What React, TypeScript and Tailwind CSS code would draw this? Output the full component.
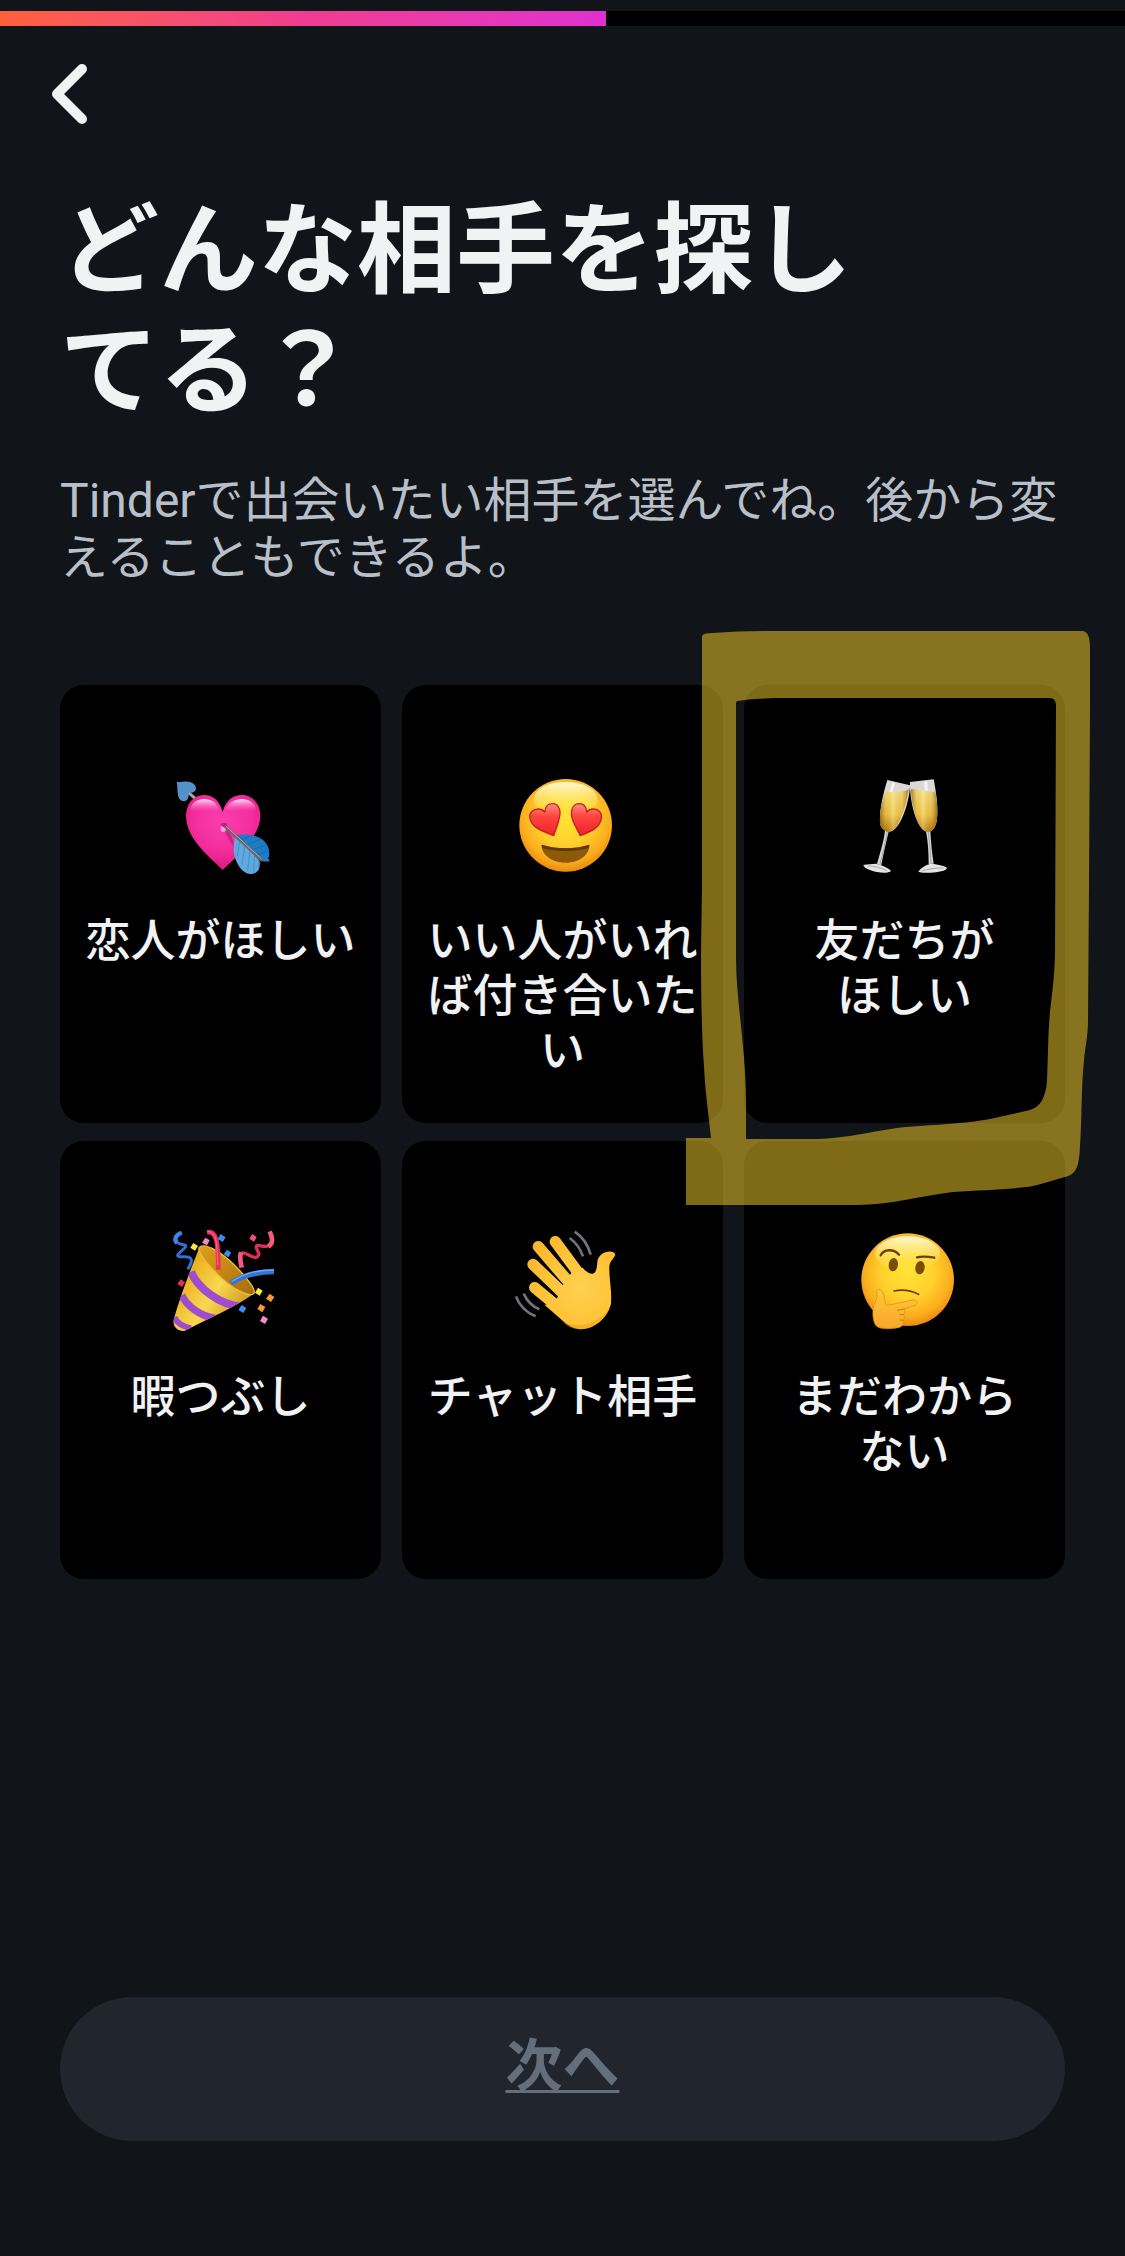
import type { ReactNode } from "react";

// ─── Types ────────────────────────────────────────────────────────────────────

interface Option {
  id: string;
  label: string;
  icon: ReactNode;
}

// ─── Icons ────────────────────────────────────────────────────────────────────

function Icon({ viewBox, children }: { viewBox: string; children: ReactNode }) {
  return (
    <svg viewBox={viewBox} className="size-[130px] shrink-0" aria-hidden="true">
      {children}
    </svg>
  );
}

function HeartArrowIcon() {
  return (
    <Icon viewBox="-12 0 390 390">
      <defs>
        <radialGradient id="ha-body" cx="0.5" cy="0.35" r="0.65">
          <stop offset="0" stopColor="#fb3fae" />
          <stop offset="0.6" stopColor="#f42d9d" />
          <stop offset="1" stopColor="#d81b80" />
        </radialGradient>
        <linearGradient id="ha-shine" x1="0" y1="0" x2="0" y2="1">
          <stop offset="0" stopColor="#ffe3f4" />
          <stop offset="1" stopColor="#ff5fbd" stopOpacity="0" />
        </linearGradient>
        <linearGradient id="ha-tip" x1="0" y1="0" x2="1" y2="1">
          <stop offset="0" stopColor="#4f93cf" />
          <stop offset="1" stopColor="#5a8fc4" />
        </linearGradient>
      </defs>
      <path d="M86 98l20 18" stroke="#a9a3a6" strokeWidth="9" />
      <path
        d="M50 66c14 2 24-5 39 0 15 3 22 15 18 25-5 8-11 7-20 6-1 14-3 27-15 27-14-1-18-14-19-26-2-13 0-22-3-32z"
        fill="url(#ha-tip)"
      />
      <path
        d="M188 330C160 300 78 240 78 168c0-36 22-63 54-63 26 0 46 15 56 51 10-36 31-51 58-51 32 0 55 27 55 63 0 66-84 132-113 162z"
        fill="url(#ha-body)"
      />
      <path
        d="M88 156c4-24 20-39 44-39 22 0 38 10 46 32-24 8-60-4-90 7zM198 149c8-22 26-32 48-32 24 0 40 14 44 36-30-8-66 4-92-4z"
        fill="url(#ha-shine)"
      />
      <path d="M193 200c14 10 27 30 30 64-12-22-28-35-30-64z" fill="#b81573" opacity="0.6" />
      <ellipse cx="190" cy="206" rx="8" ry="10" fill="#ff9bd3" />
      <path
        d="M228 225c26-4 60-2 82 16 14 12 20 30 17 48-2 10-12 14-20 12z"
        fill="#1f7cc4"
      />
      <path
        d="M228 225c-10 25-10 60 4 85 10 20 25 33 42 32 20-1 28-18 25-40z"
        fill="#5fa9df"
      />
      <g stroke="#3c7fb8" strokeWidth="2" fill="none" strokeLinecap="round">
        <path d="M240 238l-8 50M255 252l-9 60M270 266l-7 64M284 280l-3 54M296 295v36" />
      </g>
      <g stroke="#1360a0" strokeWidth="2" fill="none" strokeLinecap="round">
        <path d="M248 238l28-12M264 253l36-15M280 268l38-13M294 283l32-9" />
      </g>
      <path d="M193 197l112 103" stroke="#6d6468" strokeWidth="9" strokeLinecap="round" />
      <path d="M196 197l108 99" stroke="#b5a9ab" strokeWidth="3" strokeLinecap="round" />
      <path d="M312 300h12" stroke="#2a7fc0" strokeWidth="9" strokeLinecap="round" />
      <ellipse cx="192" cy="194" rx="10" ry="6" fill="#a9146b" opacity="0.6" />
    </Icon>
  );
}

function FaceDefs({ id }: { id: string }) {
  return (
    <defs>
      <radialGradient id={id} cx="0.5" cy="0.42" r="0.58">
        <stop offset="0" stopColor="#ffe336" />
        <stop offset="0.5" stopColor="#ffd02c" />
        <stop offset="0.82" stopColor="#fbad1e" />
        <stop offset="1" stopColor="#ea8a10" />
      </radialGradient>
      <linearGradient id={`${id}-shine`} x1="0" y1="0" x2="0" y2="1">
        <stop offset="0" stopColor="#fffce0" stopOpacity="0.95" />
        <stop offset="1" stopColor="#ffee50" stopOpacity="0" />
      </linearGradient>
    </defs>
  );
}

function HeartEyesIcon() {
  return (
    <Icon viewBox="-7 0 390 390">
      <FaceDefs id="he" />
      <defs>
        <linearGradient id="he-eye" x1="0" y1="0" x2="0" y2="1">
          <stop offset="0" stopColor="#ff8d80" />
          <stop offset="0.4" stopColor="#fd4540" />
          <stop offset="1" stopColor="#ee2228" />
        </linearGradient>
      </defs>
      <circle cx="196" cy="196" r="139" fill="url(#he)" />
      <ellipse cx="196" cy="118" rx="96" ry="52" fill="url(#he-shine)" />
      <g fill="url(#he-eye)" stroke="#c4201c" strokeWidth="4" strokeLinejoin="round">
        <path d="M160 227c-24-10-66-22-71-52-3-17 9-28 25-28 8 0 15 3 20 9 0-15 8-25 21-25 16-1 25 12 24 31-2 22-13 48-19 65z" />
        <path d="M240 227c-8-18-26-42-27-66 0-18 9-30 24-30 13 0 21 10 22 25 5-6 12-9 20-9 16 0 27 12 24 28-4 30-38 42-63 52z" />
      </g>
      <path
        d="M124 254c44 14 100 14 143 0 2 28-28 54-71 54s-74-26-72-54z"
        fill="#8c5a07"
      />
      <path d="M124 254c44 14 100 14 143 0l-1 10c-44 12-98 12-141 0z" fill="#5f3802" />
    </Icon>
  );
}

function ChampagneIcon() {
  return (
    <Icon viewBox="-1 0 390 390">
      <defs>
        <linearGradient id="ch-wine" x1="0" y1="0" x2="0" y2="1">
          <stop offset="0" stopColor="#f8e28a" />
          <stop offset="0.6" stopColor="#ecc448" />
          <stop offset="1" stopColor="#ac7010" />
        </linearGradient>
        <linearGradient id="ch-edge" x1="0" y1="0" x2="1" y2="0">
          <stop offset="0" stopColor="#5c3804" stopOpacity="0.6" />
          <stop offset="0.22" stopColor="#c08a1a" stopOpacity="0.15" />
          <stop offset="0.45" stopColor="#fff2a8" stopOpacity="0.4" />
          <stop offset="0.75" stopColor="#c08a1a" stopOpacity="0.15" />
          <stop offset="1" stopColor="#5c3804" stopOpacity="0.6" />
        </linearGradient>
      </defs>
      {/* Left glass */}
      <path d="M134 213c-4 34-15 66-24 99l13 4c6-34 14-68 22-101z" fill="#d6d4d3" />
      <path d="M141 216c-6 34-15 66-22 98" stroke="#8f8b8a" strokeWidth="2" fill="none" />
      <path d="M69 315c12-3 27-3 38-4 16 4 38 12 45 22-6 6-24 7-42 3-20-4-40-12-41-21z" fill="#e6e4e3" />
      <path d="M82 318c16-1 42 6 58 14" stroke="#aaa6a5" strokeWidth="3" fill="none" />
      <path
        d="M141 60l68 16c0 34-22 124-56 138-14 5-32-8-34-24-2-44 10-90 22-130z"
        fill="#dcd8d5"
      />
      <path
        d="M134 98c22-10 42 6 71-10-6 42-26 114-52 126-14 5-32-8-34-24-1-34 5-62 15-92z"
        fill="url(#ch-wine)"
      />
      <path
        d="M134 98c22-10 42 6 71-10-6 42-26 114-52 126-14 5-32-8-34-24-1-34 5-62 15-92z"
        fill="url(#ch-edge)"
      />
      <path d="M160 68l-8 28" stroke="#fff" strokeWidth="8" opacity="0.8" />
      {/* Right glass */}
      <path d="M257 214c6 32 8 64 8 98l15-1c-5-32-8-64-10-97z" fill="#d6d4d3" />
      <path d="M264 216c4 30 6 62 8 94" stroke="#8f8b8a" strokeWidth="2" fill="none" />
      <path d="M234 335c8-12 20-18 34-23h14c14 3 34 6 38 12-2 9-28 13-48 14-18 0-34 0-38-3z" fill="#e6e4e3" />
      <path d="M244 333c18-6 44-10 66-9" stroke="#aaa6a5" strokeWidth="3" fill="none" />
      <path
        d="M209 66l71-8c8 40 14 88 9 126-4 20-14 32-28 32-34-6-54-98-52-150z"
        fill="#dcd8d5"
      />
      <path
        d="M212 88c24-4 46 14 73 6 6 32 8 62 4 90-4 20-14 32-28 32-30-6-48-82-49-128z"
        fill="url(#ch-wine)"
      />
      <path
        d="M212 88c24-4 46 14 73 6 6 32 8 62 4 90-4 20-14 32-28 32-30-6-48-82-49-128z"
        fill="url(#ch-edge)"
      />
      <path d="M256 64l2 28" stroke="#fff" strokeWidth="10" opacity="0.7" />
    </Icon>
  );
}

function PartyIcon() {
  return (
    <Icon viewBox="-13 3 390 390">
      <defs>
        <linearGradient id="pp-cone" x1="0" y1="0" x2="1" y2="0.7">
          <stop offset="0" stopColor="#c98c10" />
          <stop offset="0.35" stopColor="#efbc2c" />
          <stop offset="0.6" stopColor="#f9d850" />
          <stop offset="1" stopColor="#c88c14" />
        </linearGradient>
        <linearGradient id="pp-in" x1="0" y1="0" x2="1" y2="1">
          <stop offset="0" stopColor="#dca11c" />
          <stop offset="1" stopColor="#a66c0a" />
        </linearGradient>
        <clipPath id="pp-clip">
          <path d="M118 96C100 140 60 240 40 315c-3 20 10 34 32 33 60-32 150-70 208-112z" />
        </clipPath>
      </defs>
      <path
        d="M118 96C100 140 60 240 40 315c-3 20 10 34 32 33 60-32 150-70 208-112-50-2-150-90-162-140z"
        fill="url(#pp-cone)"
      />
      <g clipPath="url(#pp-clip)" fill="none" stroke="#a04cd0">
        <path d="M92 170c20 50 90 102 150 104" strokeWidth="24" />
        <path d="M64 240c14 32 54 62 100 70" strokeWidth="22" />
        <path d="M42 306c6 16 24 28 50 34" strokeWidth="18" />
      </g>
      <path
        d="M118 96c20-14 72 20 112 62 34 36 60 70 50 78-16 12-70-18-110-60-38-38-62-72-52-80z"
        fill="url(#pp-in)"
        stroke="#f0bd38"
        strokeWidth="4"
      />
      <path d="M140 52c26-4 34 18 34 112" fill="none" stroke="#e8315c" strokeWidth="14" />
      <path d="M142 50c24 0 28 20 30 100" fill="none" stroke="#ff6f90" strokeWidth="3" />
      <path d="M212 204c28-18 64-34 129-34" fill="none" stroke="#3474d8" strokeWidth="16" />
      <path d="M214 199c30-18 64-34 127-34" fill="none" stroke="#6ba6f5" strokeWidth="4" />
      <path
        d="M64 53c-30 12-20 34 6 36 20 4-14 20-18 32 2 10 30-2 40 10 5 10-4 22-10 32"
        fill="none"
        stroke="#3270d4"
        strokeWidth="9"
      />
      <path d="M64 53c-22 8-22 24-14 30" fill="none" stroke="#3f84e8" strokeWidth="13" />
      <path
        d="M326 50c14 20 10 42-8 44-14 2-32-10-30 4 4 14 14 20 2 28-16 8-44-28-50-4-3 12 2 24 4 34"
        fill="none"
        stroke="#dd2f5c"
        strokeWidth="10"
      />
      <path d="M328 50c12 22 8 38-4 44M242 112c-6 14 0 34 2 46" fill="none" stroke="#f25a80" strokeWidth="14" />
      <path d="M99 84l14 9-9 14-14-9z" fill="#f8e94a" />
      <path d="M135 68l13 8-8 15-15-8z" fill="#f78ab4" />
      <path d="M181 57l15 10-9 14-15-9z" fill="#3f8af0" />
      <path d="M200 104l13 9-9 14-14-9z" fill="#3f8af0" />
      <path d="M276 57l13 9-8 14-14-9z" fill="#f0527c" />
      <path d="M61 193l13 9-9 14-14-9z" fill="#e0315c" />
      <path d="M293 218l14 9-9 15-14-9z" fill="#f8e94a" />
      <path d="M328 236l14 10-10 15-15-10z" fill="#f79a36" />
      <path d="M300 267l15 9-9 16-15-10z" fill="#f79a36" />
      <path d="M244 270l14 9-9 15-15-9z" fill="#3b8cf0" />
      <path d="M308 302l15 9-9 16-15-9z" fill="#f78ad0" />
    </Icon>
  );
}

function WaveIcon() {
  return (
    <Icon viewBox="-7 3 390 390">
      <defs>
        <radialGradient id="wv" gradientUnits="userSpaceOnUse" cx="240" cy="220" r="190">
          <stop offset="0" stopColor="#ffd050" />
          <stop offset="0.55" stopColor="#ffc438" />
          <stop offset="1" stopColor="#fbb42a" />
        </radialGradient>
      </defs>
      {/* Fingers */}
      <g fill="none" stroke="url(#wv)" strokeWidth="34" strokeLinecap="round">
        <path d="M165 80l74 100" />
        <path d="M114 95l98 114" />
        <path d="M98 148l100 96" />
        <path d="M103 218l92 76" />
      </g>
      {/* Palm and thumb */}
      <path
        d="M213 174l34-16c10 12 20 19 30 18 12-2 13-22 14-36 3-20 22-32 42-30 11 1 14 8 10 14-8 12-15 18-16 32-1 34 8 70 5 108-4 34-42 78-90 79-22 0-44-14-60-30l-50-44c12 2 36-8 38-19l18-39z"
        fill="url(#wv)"
      />
      <path
        d="M188 322c24 22 44 21 56 21 40-2 76-34 88-78-14 34-46 60-80 64-22 2-44 0-64-7z"
        fill="#e89a1c"
        opacity="0.45"
      />
      <g fill="none" stroke="#737477" strokeWidth="8">
        <path d="M223 50c24 16 40 40 48 69" />
        <path d="M208 69c19 14 32 32 40 55" />
        <path d="M47 244c10 28 30 48 59 60" />
        <path d="M70 236c10 22 25 38 47 47" />
      </g>
    </Icon>
  );
}

function ThinkingIcon() {
  return (
    <Icon viewBox="-1 3 390 390">
      <FaceDefs id="th" />
      <defs>
        <linearGradient id="th-hand" x1="0" y1="0" x2="0" y2="1">
          <stop offset="0" stopColor="#ffc935" />
          <stop offset="1" stopColor="#f9a62a" />
        </linearGradient>
      </defs>
      <circle cx="202" cy="194" r="139" fill="url(#th)" />
      <ellipse cx="202" cy="116" rx="98" ry="52" fill="url(#th-shine)" />
      <ellipse cx="159" cy="149" rx="14" ry="20" fill="#7a4d05" transform="rotate(8 159 149)" />
      <ellipse cx="239" cy="158" rx="14" ry="20" fill="#7a4d05" transform="rotate(8 239 158)" />
      <g fill="none" stroke="#6a3f08" strokeLinecap="round">
        <path d="M121 121c10-20 40-20 55-2" strokeWidth="7" />
        <path d="M230 127c14-3 34-2 52 1" strokeWidth="7" />
        <path d="M161 228c24-5 50-2 74 10" strokeWidth="5" />
      </g>
      <path
        d="M104 262c6-8 8-18 5-30-2-8 8-12 14-6 8 9 10 24 12 40 4 6 12 4 22 2l60-13c12-2 18 10 8 16l-34 11c4 6 4 12-1 16 4 6 3 12-1 16 4 12-4 22-16 24-22 4-50 6-64-4-12-10-16-50-5-72z"
        fill="url(#th-hand)"
        stroke="#d98a14"
        strokeWidth="2"
        strokeLinejoin="round"
      />
      <path
        d="M191 282l-20 4M190 299l-12-1M189 316l-10-1"
        fill="none"
        stroke="#c97a0c"
        strokeWidth="3"
        strokeLinecap="round"
      />
    </Icon>
  );
}

// ─── Data ─────────────────────────────────────────────────────────────────────

const OPTIONS: Option[] = [
  { id: "lover", label: "恋人がほしい", icon: <HeartArrowIcon /> },
  { id: "maybe", label: "いい人がいれば付き合いたい", icon: <HeartEyesIcon /> },
  { id: "friends", label: "友だちが\nほしい", icon: <ChampagneIcon /> },
  { id: "killtime", label: "暇つぶし", icon: <PartyIcon /> },
  { id: "chat", label: "チャット相手", icon: <WaveIcon /> },
  { id: "unsure", label: "まだわから\nない", icon: <ThinkingIcon /> },
];

// ─── Parts ────────────────────────────────────────────────────────────────────

function OptionCard({ option }: { option: Option }) {
  return (
    <button
      type="button"
      className="flex min-h-[438px] flex-col items-center rounded-3xl bg-black px-6 pt-[75px] text-[45px] leading-[55px] font-medium text-[#f0f2f4]"
    >
      {option.icon}
      <span className="mt-5 text-center whitespace-pre-line">{option.label}</span>
    </button>
  );
}

/** Highlighter stroke drawn around the last card of the first row. */
function Marker() {
  return (
    <svg
      viewBox="686 630 405 576"
      className="pointer-events-none absolute -top-[55px] -right-[26px] h-[576px] w-[405px]"
      aria-hidden="true"
    >
      <path
        fillRule="evenodd"
        fill="#f0c828"
        fillOpacity="0.53"
        d="M686 1138h25C708 1110 705 1090 704 1066C702 1040 701 1000 701 950L702 887V636Q703 633 712 633Q740 631 770 631H1083Q1090 632 1090 648V709L1089 887L1088 1021C1088 1036 1085 1048 1084 1060C1081 1090 1082 1120 1080 1146C1079 1166 1077 1174 1065 1177C1050 1181 1040 1185 1027 1187C1000 1190 980 1190 953 1192C920 1196 890 1205 857 1205L686 1205ZM746 1139H817C855 1138 880 1128 920 1126C945 1124 970 1123 990 1119L1030 1110C1040 1107 1046 1098 1047 1080C1048 1060 1048 1040 1049 1025C1050 1005 1055 980 1055 950L1056 704Q1055 698 1050 698H777Q750 699 738 701Q736 701 736 703V958C736 1000 746 1050 746 1100Z"
      />
    </svg>
  );
}

// ─── Page ─────────────────────────────────────────────────────────────────────

export default function App() {
  return (
    <div
      lang="ja"
      className="flex min-h-screen flex-col bg-[#111418] pt-[11px] font-['Noto_Sans_CJK_JP',sans-serif] text-[#f0f2f4]"
    >
      <div
        role="progressbar"
        aria-label="プロフィール登録"
        aria-valuenow={54}
        aria-valuemin={0}
        aria-valuemax={100}
        className="h-[15px] bg-black"
      >
        <div className="h-full bg-linear-to-r from-[#ff6036] via-[#f03c8f] to-[#e030cf]" style={{ width: "53.9%" }} />
      </div>

      <header className="px-[51px] pt-[38px]">
        <button type="button" aria-label="戻る" className="block">
          <svg viewBox="0 0 36 60" className="h-[60px] w-9" aria-hidden="true">
            <path
              d="M31 5L6 30l25 25"
              fill="none"
              stroke="#f0f2f4"
              strokeWidth="10"
              strokeLinecap="round"
              strokeLinejoin="round"
            />
          </svg>
        </button>
      </header>

      <main className="flex flex-1 flex-col px-[60px] pt-[58px] pb-[115px]">
        <h1 className="pr-44 text-[99px] leading-[120px] font-bold">どんな相手を探してる？</h1>
        <p className="mt-[50px] font-[Roboto,'Noto_Sans_CJK_JP',sans-serif] text-[48px] leading-[57px] text-[#b9bfc8]">
          Tinderで出会いたい相手を選んでね。後から変えることもできるよ。
        </p>

        <div className="relative mt-[99px] grid grid-cols-3 gap-x-[21px] gap-y-[18px]">
          {OPTIONS.map((option) => (
            <OptionCard key={option.id} option={option} />
          ))}
          <Marker />
        </div>

        <button
          type="button"
          disabled
          className="mt-auto h-36 rounded-full bg-[#21252e] pb-4 text-[57px] leading-[72px] font-bold text-[#656e7b] underline decoration-3 underline-offset-4 [text-decoration-skip-ink:none]"
        >
          次へ
        </button>
      </main>
    </div>
  );
}
